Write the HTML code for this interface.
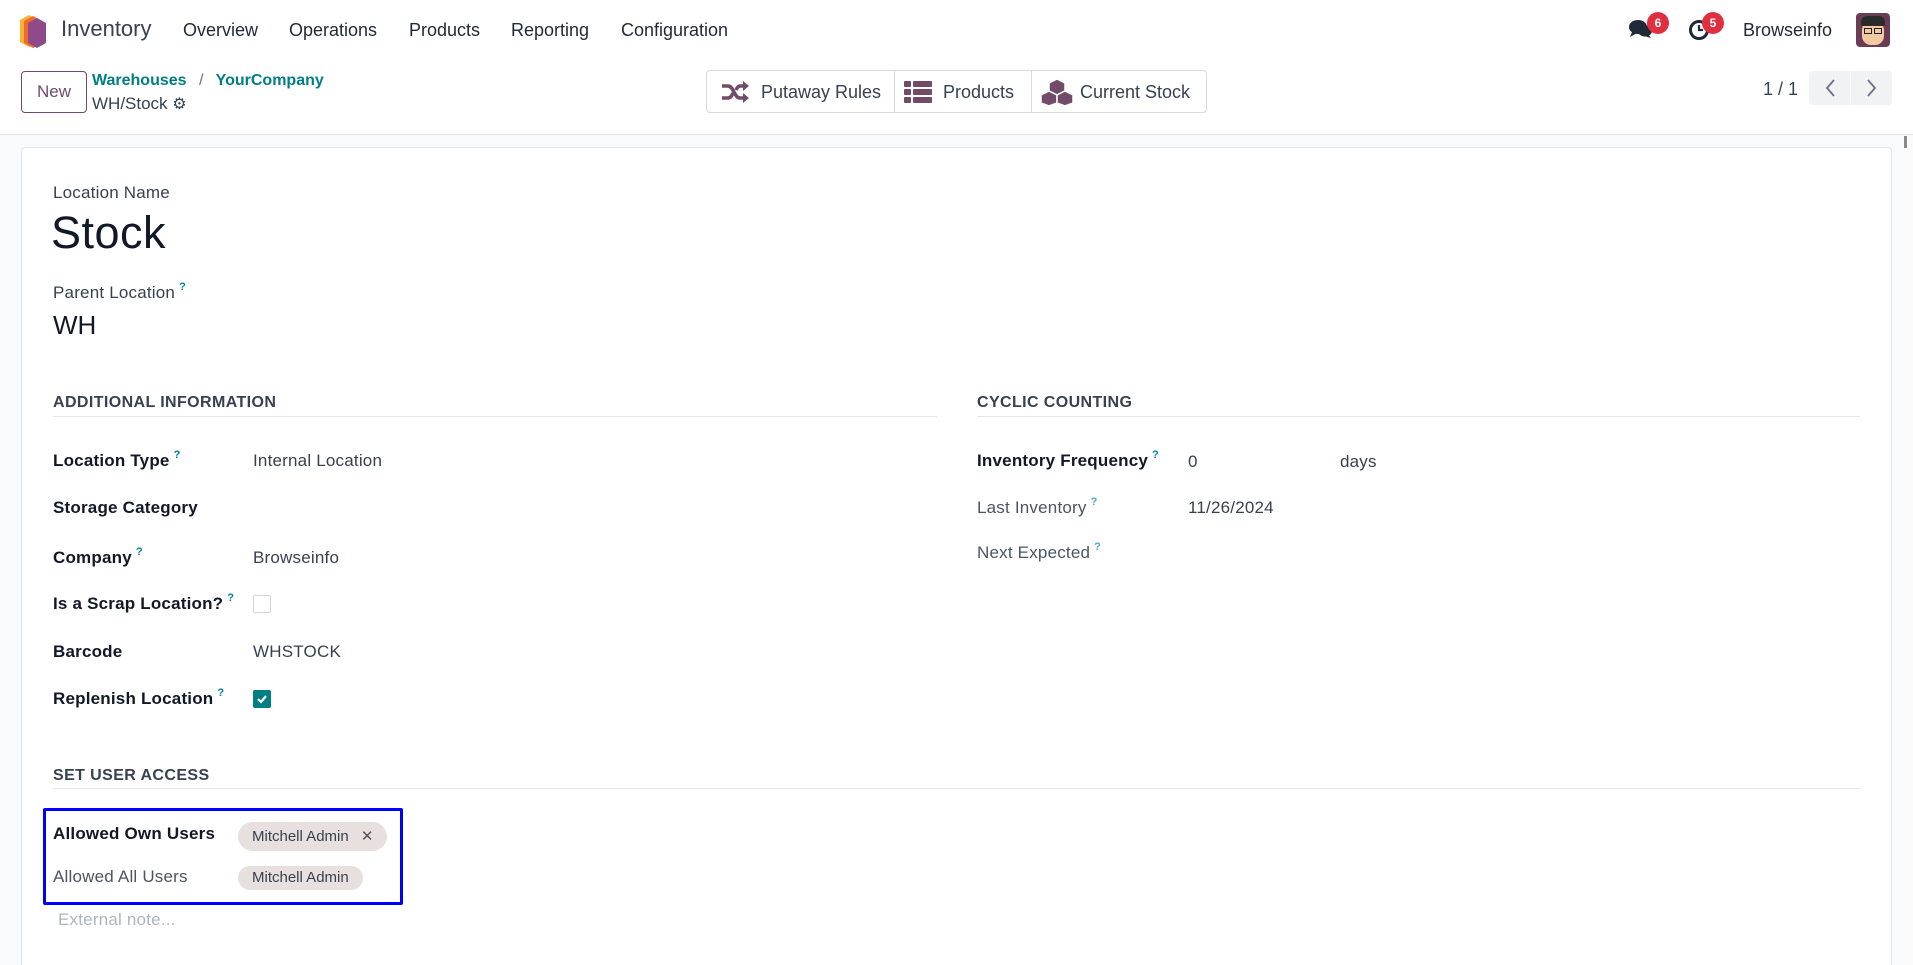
<!DOCTYPE html>
<html><head><meta charset="utf-8"><style>
*{box-sizing:border-box;margin:0;padding:0}
html,body{width:1913px;height:965px;overflow:hidden}
body{background:#fff;font-family:"Liberation Sans",sans-serif;color:#374151;position:relative}
.a{position:absolute;white-space:nowrap;line-height:24px}
.lbl{font-size:17px;font-weight:bold;color:#111827;letter-spacing:.2px}
.lbll{font-size:17px;color:#4b5563;letter-spacing:.2px}
.val{font-size:17px;color:#374151;letter-spacing:.2px}
.q{color:#0180a5;font-size:11px;font-weight:bold;position:relative;top:-8px;margin-left:4px;line-height:0}
.sec{font-size:16px;font-weight:bold;color:#374151;letter-spacing:.4px}
.hr{position:absolute;height:1px;background:#e5e7eb}
.nav{font-size:18px;color:#1f2937}
.tag{position:absolute;background:#e7e0de;border-radius:15px;height:29px;font-size:15px;color:#374151;line-height:29px;padding:0 12px}
</style></head><body>
<!-- navbar -->
<svg class="a" style="left:20px;top:15px" width="28" height="33" viewBox="0 0 28 33">
<polygon points="9,0 18,5 18,27 9,32 0,27 0,5" fill="#f9b233"/>
<polygon points="13,1 22,6 22,28 13,33 4,28 4,6" fill="#f06b2b"/>
<polygon points="17,3 26,8 26,28 17,33 8,28 8,8" fill="#8e4a89"/>
</svg>
<div class="a" style="left:61px;top:17px;font-size:22px;color:#374151">Inventory</div>
<div class="a nav" style="left:183px;top:18px">Overview</div>
<div class="a nav" style="left:289px;top:18px">Operations</div>
<div class="a nav" style="left:409px;top:18px">Products</div>
<div class="a nav" style="left:511px;top:18px">Reporting</div>
<div class="a nav" style="left:621px;top:18px">Configuration</div>
<svg class="a" style="left:1629px;top:19px" width="24" height="20" viewBox="0 0 24 20"><ellipse cx="9" cy="8" rx="9" ry="7" fill="#1f2937"/><path d="M3 13 L1 18 L8 14Z" fill="#1f2937"/><ellipse cx="16" cy="12" rx="7" ry="5.5" fill="#1f2937"/><path d="M19 15 L22 19 L15 17Z" fill="#1f2937"/></svg>
<div class="a" style="left:1647px;top:12px;width:22px;height:22px;border-radius:11px;background:#e0303f;color:#fff;font-size:12px;line-height:22px;text-align:center;font-weight:bold">6</div>
<svg class="a" style="left:1688px;top:19px" width="22" height="22" viewBox="0 0 22 22"><circle cx="11" cy="11" r="8.5" fill="none" stroke="#1f2937" stroke-width="3"/><path d="M11 6 V11 H15" stroke="#1f2937" stroke-width="2.2" fill="none"/></svg>
<div class="a" style="left:1702px;top:12px;width:22px;height:22px;border-radius:11px;background:#e0303f;color:#fff;font-size:12px;line-height:22px;text-align:center;font-weight:bold">5</div>
<div class="a" style="left:1743px;top:18px;font-size:18px;color:#1f2937">Browseinfo</div>
<div class="a" style="left:1856px;top:13px;width:34px;height:34px;border-radius:4px;background:#6b3d55;overflow:hidden">
<div style="position:absolute;left:6px;top:8px;width:22px;height:24px;border-radius:9px;background:#f2c9a0"></div>
<div style="position:absolute;left:5px;top:3px;width:24px;height:10px;border-radius:6px 6px 2px 2px;background:#2b2b2b"></div>
<div style="position:absolute;left:8px;top:15px;width:8px;height:6px;border:1.5px solid #222"></div>
<div style="position:absolute;left:18px;top:15px;width:8px;height:6px;border:1.5px solid #222"></div>
</div>
<!-- control panel -->
<div class="a" style="left:21px;top:71px;width:66px;height:42px;border:1px solid #714b67;border-radius:4px;color:#714b67;font-size:17px;line-height:40px;text-align:center">New</div>
<div class="a" style="left:92px;top:69px;font-size:16px;color:#017e84;font-weight:bold">Warehouses <span style="color:#6b7280;font-weight:normal;margin:0 8px">/</span> YourCompany</div>
<div class="a" style="left:92px;top:92px;font-size:17px;color:#374151">WH/Stock <span style="font-size:16px">⚙</span></div>
<div class="a" style="left:706px;top:70px;width:501px;height:43px;border:1px solid #d8dadd;border-radius:4px"></div>
<div class="a" style="left:894px;top:71px;width:1px;height:41px;background:#d8dadd"></div>
<div class="a" style="left:1031px;top:71px;width:1px;height:41px;background:#d8dadd"></div>
<svg class="a" style="left:720px;top:81px" width="30" height="22" viewBox="0 0 30 22"><path d="M2 5 H8 C14 5 14 17 20 17 H24 M2 17 H8 C11 17 12 14 13 12 M16 9 C17 7 18 5 20 5 H24" stroke="#714b67" stroke-width="3.5" fill="none"/><path d="M23 0 L29 5 L23 10Z M23 12 L29 17 L23 22Z" fill="#714b67"/></svg>
<div class="a" style="left:761px;top:80px;font-size:18px">Putaway Rules</div>
<svg class="a" style="left:904px;top:81px" width="28" height="22" viewBox="0 0 28 22"><g fill="#714b67"><rect x="0" y="0" width="7" height="6" rx="1"/><rect x="9" y="0" width="19" height="6" rx="1"/><rect x="0" y="8" width="7" height="6" rx="1"/><rect x="9" y="8" width="19" height="6" rx="1"/><rect x="0" y="16" width="7" height="6" rx="1"/><rect x="9" y="16" width="19" height="6" rx="1"/></g></svg>
<div class="a" style="left:943px;top:80px;font-size:18px">Products</div>
<svg class="a" style="left:1040px;top:78px" width="34" height="28" viewBox="0 0 34 28"><g fill="#714b67" stroke="#fff" stroke-width="1.5"><path d="M17 1 L25 5 L25 13 L17 17 L9 13 L9 5Z"/><path d="M9 13 L17 17 L17 25 L9 28 L1 25 L1 17Z"/><path d="M25 13 L33 17 L33 25 L25 28 L17 25 L17 17Z"/></g></svg>
<div class="a" style="left:1080px;top:80px;font-size:18px">Current Stock</div>
<div class="a" style="left:1763px;top:77px;font-size:18px">1 / 1</div>
<div class="a" style="left:1809px;top:71px;width:83px;height:34px;background:#f1f2f4;border-radius:4px"></div>
<div class="a" style="left:1850px;top:71px;width:1px;height:34px;background:#fff"></div>
<svg class="a" style="left:1823px;top:78px" width="14" height="20" viewBox="0 0 14 20"><path d="M11 2 L4 10 L11 18" stroke="#6b7280" stroke-width="1.8" fill="none"/></svg>
<svg class="a" style="left:1865px;top:78px" width="14" height="20" viewBox="0 0 14 20"><path d="M3 2 L10 10 L3 18" stroke="#6b7280" stroke-width="1.8" fill="none"/></svg>
<!-- background -->
<div class="a" style="left:0;top:134px;width:1913px;height:831px;background:#f9fafb;border-top:1px solid #e5e7eb"></div>
<div class="a" style="left:21px;top:147px;width:1871px;height:818px;background:#fff;border:1px solid #e2e4e8;border-bottom:none;border-radius:4px 4px 0 0"></div>
<div class="a" style="left:1900px;top:135px;width:13px;height:830px;background:#fafafa"></div>
<div class="a" style="left:1904px;top:136px;width:3px;height:12px;background:#888"></div>
<!-- form -->
<div class="a lbl" style="left:53px;top:181px;font-weight:normal;color:#374151">Location Name</div>
<div class="a" style="left:51px;top:207px;font-size:45px;line-height:52px;color:#111827;letter-spacing:.5px">Stock</div>
<div class="a lbll" style="left:53px;top:281px;color:#374151">Parent Location<span class="q">?</span></div>
<div class="a" style="left:53px;top:310px;font-size:26px;line-height:30px;color:#111827">WH</div>
<div class="a sec" style="left:53px;top:391px">ADDITIONAL INFORMATION</div>
<div class="hr" style="left:53px;top:416px;width:884px"></div>
<div class="a sec" style="left:977px;top:391px">CYCLIC COUNTING</div>
<div class="hr" style="left:977px;top:416px;width:883px"></div>

<div class="a lbl" style="left:53px;top:449px">Location Type<span class="q">?</span></div>
<div class="a val" style="left:253px;top:449px">Internal Location</div>
<div class="a lbl" style="left:53px;top:496px">Storage Category</div>
<div class="a lbl" style="left:53px;top:546px">Company<span class="q">?</span></div>
<div class="a val" style="left:253px;top:546px">Browseinfo</div>
<div class="a lbl" style="left:53px;top:592px">Is a Scrap Location?<span class="q">?</span></div>
<div class="a" style="left:253px;top:595px;width:18px;height:18px;border:1px solid #d1d5db;border-radius:2px"></div>
<div class="a lbl" style="left:53px;top:640px">Barcode</div>
<div class="a val" style="left:253px;top:640px">WHSTOCK</div>
<div class="a lbl" style="left:53px;top:687px">Replenish Location<span class="q">?</span></div>
<div class="a" style="left:253px;top:690px;width:18px;height:18px;background:#017e84;border-radius:2px"><svg width="18" height="18" viewBox="0 0 18 18" style="display:block"><path d="M5 9 L8 12 L13 6" stroke="#fff" stroke-width="2.2" fill="none"/></svg></div>

<div class="a lbl" style="left:977px;top:449px">Inventory Frequency<span class="q">?</span></div>
<div class="a val" style="left:1188px;top:450px">0</div>
<div class="a val" style="left:1340px;top:450px">days</div>
<div class="a lbll" style="left:977px;top:496px">Last Inventory<span class="q" style="color:#4aa8c7">?</span></div>
<div class="a val" style="left:1188px;top:496px">11/26/2024</div>
<div class="a lbll" style="left:977px;top:541px">Next Expected<span class="q" style="color:#4aa8c7">?</span></div>

<div class="a sec" style="left:53px;top:764px">SET USER ACCESS</div>
<div class="hr" style="left:53px;top:788px;width:1807px"></div>
<div class="a" style="left:43px;top:808px;width:360px;height:97px;border:3px solid #0000ff;border-radius:2px"></div>
<div class="a lbl" style="left:53px;top:822px">Allowed Own Users</div>
<div class="tag" style="left:238px;top:822px;padding:0 14px">Mitchell Admin <span style="margin-left:8px;color:#555">✕</span></div>
<div class="a lbll" style="left:53px;top:865px">Allowed All Users</div>
<div class="tag" style="left:238px;top:866px;height:24px;line-height:24px;padding:0 14px">Mitchell Admin</div>
<div class="a" style="left:58px;top:908px;font-size:17px;color:#b0b4bb;letter-spacing:.2px">External note...</div>
</body></html>
